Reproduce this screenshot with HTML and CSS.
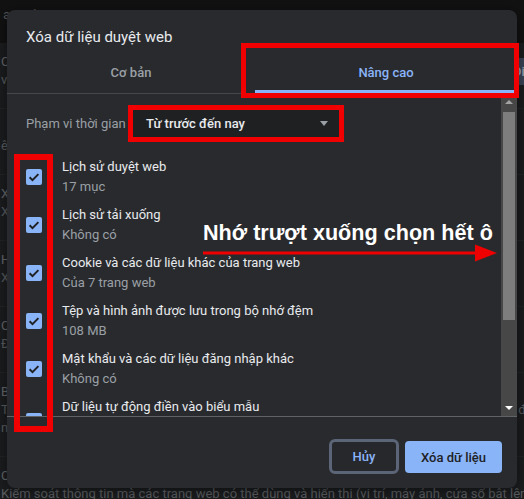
FILE: index.html
```html
<!DOCTYPE html>
<html lang="vi">
<head>
    <meta charset="UTF-8">
    <meta name="viewport" content="width=device-width, initial-scale=1.0">
    <title>Xóa dữ liệu duyệt web</title>
    <link rel="stylesheet" href="styles.css">
</head>
<body>
    <!-- Settings page behind the dialog -->
    <div class="page">
        <div class="page-top">an toàn</div>
        <div class="card">
            <div class="bg-row">
                <div class="bg-text">
                    <div class="bg-title">Cookie</div>
                    <div class="bg-sub">vẫn</div>
                </div>
                <span class="bg-btn">Điều chỉnh</span>
            </div>
            <div class="bg-row">
                <div class="bg-text">
                    <div class="bg-title">&nbsp;</div>
                    <div class="bg-sub">ên</div>
                </div>
            </div>
            <div class="bg-row">
                <div class="bg-text">
                    <div class="bg-title">Xóa</div>
                    <div class="bg-sub">Xóa</div>
                </div>
            </div>
            <div class="bg-row">
                <div class="bg-text">
                    <div class="bg-title">Hướng</div>
                    <div class="bg-sub">Xem</div>
                </div>
            </div>
            <div class="bg-row">
                <div class="bg-text">
                    <div class="bg-title">Cookie</div>
                    <div class="bg-sub">Đã</div>
                </div>
            </div>
            <div class="bg-row">
                <div class="bg-text">
                    <div class="bg-title">Bảo</div>
                    <div class="bg-sub bg-split"><span>Tính</span><span class="bg-tail">đã</span></div>
                    <div class="bg-sub">nhiều</div>
                </div>
            </div>
            <div class="bg-row">
                <div class="bg-text">
                    <div class="bg-title">Cài</div>
                    <div class="bg-sub">Kiểm soát thông tin mà các trang web có thể dùng và hiển thị (vị trí, máy ảnh, cửa sổ bật lên và các thông tin khác)</div>
                </div>
            </div>
        </div>
    </div>

    <!-- Clear browsing data dialog -->
    <div class="dialog">
        <div class="dialog-title">Xóa dữ liệu duyệt web</div>
        <div class="tabs">
            <div class="tab tab-basic">Cơ bản</div>
            <div class="tab tab-advanced active">Nâng cao</div>
        </div>

        <div class="dialog-body">
            <div class="scroll">
                <div class="range-row">
                    <span class="range-label">Phạm vi thời gian</span>
                    <div class="select">
                        <span>Từ trước đến nay</span>
                        <span class="caret"></span>
                    </div>
                </div>

                <div class="item">
                    <span class="checkbox"><svg viewBox="0 0 16 16" width="16" height="16"><path d="M3.6 8.3l2.9 2.8 5.9-6" fill="none" stroke="#202124" stroke-width="2"/></svg></span>
                    <div>
                        <div class="item-title">Lịch sử duyệt web</div>
                        <div class="item-sub">17 mục</div>
                    </div>
                </div>
                <div class="item">
                    <span class="checkbox"><svg viewBox="0 0 16 16" width="16" height="16"><path d="M3.6 8.3l2.9 2.8 5.9-6" fill="none" stroke="#202124" stroke-width="2"/></svg></span>
                    <div>
                        <div class="item-title">Lịch sử tải xuống</div>
                        <div class="item-sub">Không có</div>
                    </div>
                </div>
                <div class="item">
                    <span class="checkbox"><svg viewBox="0 0 16 16" width="16" height="16"><path d="M3.6 8.3l2.9 2.8 5.9-6" fill="none" stroke="#202124" stroke-width="2"/></svg></span>
                    <div>
                        <div class="item-title">Cookie và các dữ liệu khác của trang web</div>
                        <div class="item-sub">Của 7 trang web</div>
                    </div>
                </div>
                <div class="item">
                    <span class="checkbox"><svg viewBox="0 0 16 16" width="16" height="16"><path d="M3.6 8.3l2.9 2.8 5.9-6" fill="none" stroke="#202124" stroke-width="2"/></svg></span>
                    <div>
                        <div class="item-title">Tệp và hình ảnh được lưu trong bộ nhớ đệm</div>
                        <div class="item-sub">108 MB</div>
                    </div>
                </div>
                <div class="item">
                    <span class="checkbox"><svg viewBox="0 0 16 16" width="16" height="16"><path d="M3.6 8.3l2.9 2.8 5.9-6" fill="none" stroke="#202124" stroke-width="2"/></svg></span>
                    <div>
                        <div class="item-title">Mật khẩu và các dữ liệu đăng nhập khác</div>
                        <div class="item-sub">Không có</div>
                    </div>
                </div>
                <div class="item">
                    <span class="checkbox"><svg viewBox="0 0 16 16" width="16" height="16"><path d="M3.6 8.3l2.9 2.8 5.9-6" fill="none" stroke="#202124" stroke-width="2"/></svg></span>
                    <div>
                        <div class="item-title">Dữ liệu tự động điền vào biểu mẫu</div>
                    </div>
                </div>
            </div>

            <div class="scrollbar">
                <span class="arrow arrow-up"></span>
                <div class="thumb"></div>
                <span class="arrow arrow-down"></span>
            </div>
        </div>

        <div class="footer">
            <button class="btn btn-cancel">Hủy</button>
            <button class="btn btn-primary">Xóa dữ liệu</button>
        </div>
    </div>

    <!-- Red annotations drawn over the screenshot -->
    <div class="mark mark-tab"></div>
    <div class="mark mark-range"></div>
    <div class="mark mark-checks"></div>
    <div class="note">Nhớ trượt xuống chọn hết ô</div>
    <svg class="note-arrow" width="300" height="22" viewBox="0 0 300 22">
        <line x1="3" y1="11" x2="280" y2="11" stroke="#ee0000" stroke-width="3"/>
        <polygon points="275,2.5 297,11 275,19.5" fill="#ee0000"/>
    </svg>
</body>
</html>
```

FILE: styles.css
```css
* {
    box-sizing: border-box;
}
html, body {
    margin: 0;
    height: 100%;
}
body {
    position: relative;
    overflow: hidden;
    background-color: #121213;
    font-family: Roboto, "Noto Sans", Arial, sans-serif;
    font-size: 13px;
}

/* page behind */
.page {
    padding-top: 6px;
}
.page-top {
    height: 18px;
    line-height: 18px;
    margin-bottom: 19px;
    padding-left: 3px;
    color: #55585c;
}
.card {
    background-color: #1c1d1f;
}
.bg-row {
    display: flex;
    align-items: center;
    padding: 10px 0 19px 1px;
    border-bottom: 1px solid #232427;
}
.bg-text {
    flex: 1;
    min-width: 0;
}
.bg-title, .bg-sub {
    line-height: 18px;
    white-space: nowrap;
    overflow: hidden;
    color: #5a5d61;
}
.bg-title {
    color: #66696d;
}
.bg-split {
    display: flex;
    justify-content: space-between;
    overflow: visible;
}
.bg-tail {
    margin-right: -9px;
}
.bg-btn {
    flex: none;
    margin-right: -58px;
    padding: 0 8px;
    height: 27px;
    line-height: 27px;
    border-radius: 4px;
    background-color: #3a4355;
    color: #9aa4b6;
    font-weight: 500;
}

/* dialog */
.dialog {
    position: absolute;
    left: 7px;
    top: 10px;
    width: 510px;
    height: 478px;
    display: flex;
    flex-direction: column;
    background-color: #292a2d;
    border-radius: 8px;
    overflow: hidden;
    box-shadow: 0 2px 14px rgba(0, 0, 0, 0.5);
}
.dialog-title {
    height: 41px;
    padding: 15px 19px 0;
    line-height: 24px;
    font-size: 15px;
    color: #e8eaed;
}
.tabs {
    display: flex;
    height: 43px;
    border-bottom: 1px solid #45474b;
}
.tab {
    display: flex;
    align-items: center;
    justify-content: center;
    padding-top: 3px;
    border-bottom: 3px solid transparent;
    color: #9aa0a6;
    font-weight: 500;
}
.tab-basic {
    flex: 0 0 248px;
}
.tab-advanced {
    flex: 1;
}
.tab.active {
    color: #8ab4f8;
    border-bottom-color: #8ab4f8;
}

.dialog-body {
    flex: 1;
    display: flex;
    min-height: 0;
}
.scroll {
    flex: 1;
    overflow: hidden;
    padding-left: 19px;
}
.range-row {
    display: flex;
    align-items: center;
    margin: 13px 0 14px;
}
.range-label {
    flex: 0 0 105px;
    color: #9aa0a6;
}
.select {
    display: flex;
    align-items: center;
    justify-content: space-between;
    width: 208px;
    height: 32px;
    padding: 0 11px 0 15px;
    border-radius: 4px;
    background-color: #1f2022;
    color: #e8eaed;
    font-weight: 500;
}
.caret {
    width: 0;
    height: 0;
    border-left: 4px solid transparent;
    border-right: 4px solid transparent;
    border-top: 5px solid #9aa0a6;
}
.item {
    display: flex;
    align-items: center;
    height: 48px;
}
.item:last-child {
    align-items: flex-start;
    padding-top: 4px;
}
.checkbox {
    flex: none;
    width: 16px;
    height: 16px;
    margin-right: 20px;
    border-radius: 2px;
    background-color: #8ab4f8;
}
.item:last-child .checkbox {
    margin-top: 16px;
}
.checkbox svg {
    display: block;
}
.item-title {
    line-height: 20px;
    color: #e8eaed;
}
.item-sub {
    line-height: 20px;
    color: #9aa0a6;
}

.scrollbar {
    flex: none;
    width: 16px;
    display: flex;
    flex-direction: column;
    background-color: #474747;
}
.arrow {
    height: 16px;
    display: flex;
    align-items: center;
    justify-content: center;
}
.arrow::before {
    content: "";
    width: 0;
    height: 0;
    border-left: 4px solid transparent;
    border-right: 4px solid transparent;
}
.arrow-up::before {
    border-bottom: 4px solid #a3a3a3;
}
.arrow-down {
    margin-top: auto;
}
.arrow-down::before {
    border-top: 4px solid #ffffff;
}
.thumb {
    height: 208px;
    margin: 2px 2px 0;
    background-color: #7d7d7d;
}

.footer {
    height: 72px;
    display: flex;
    justify-content: flex-end;
    align-items: flex-start;
    gap: 6px;
    padding: 22px 15px 0;
    border-top: 1px solid #5f6368;
}
.btn {
    font-family: Roboto, "Noto Sans", Arial, sans-serif;
    font-size: 13px;
    font-weight: 500;
    border-radius: 4px;
    cursor: pointer;
}
.btn-cancel {
    width: 70px;
    height: 35px;
    border: 3px solid #5b6577;
    border-radius: 6px;
    background-color: #27282b;
    color: #8ab4f8;
}
.btn-primary {
    width: 97px;
    height: 32px;
    margin-top: 2px;
    border: none;
    background-color: #8ab4f8;
    color: #202124;
}

/* annotations */
.mark {
    position: absolute;
    border: 5px solid #f00000;
}
.mark-tab {
    left: 241px;
    top: 43px;
    width: 278px;
    height: 55px;
}
.mark-range {
    left: 128px;
    top: 105px;
    width: 216px;
    height: 37px;
}
.mark-checks {
    left: 14px;
    top: 154px;
    width: 39px;
    height: 278px;
    border-width: 6px;
}
.note {
    position: absolute;
    left: 203px;
    top: 220px;
    line-height: 26px;
    white-space: nowrap;
    font-family: "Liberation Sans", Arial, sans-serif;
    font-size: 21.6px;
    font-weight: bold;
    color: #ffffff;
}
.note-arrow {
    position: absolute;
    left: 200px;
    top: 242px;
}
```
